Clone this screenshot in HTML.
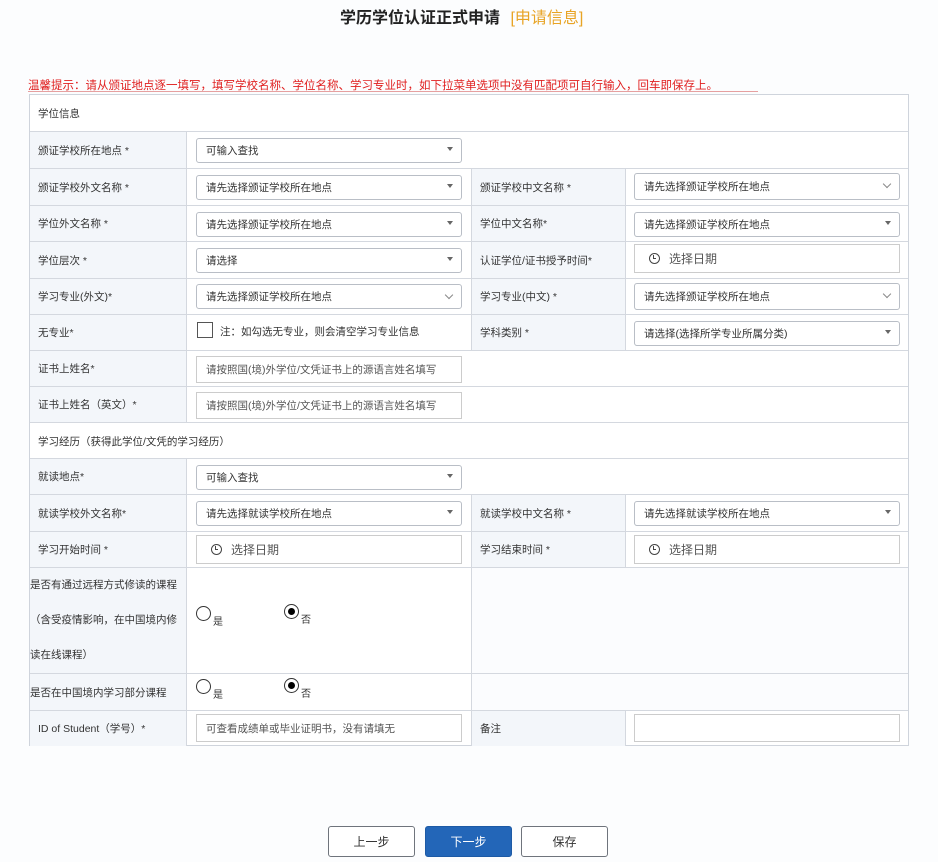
<!DOCTYPE html>
<html><head><meta charset="utf-8"><style>
*{margin:0;padding:0;box-sizing:border-box}
body{width:938px;height:862px;background:#fcfdfe;position:relative;overflow:hidden;font-family:"Liberation Sans","Noto Sans CJK SC",sans-serif;color:#333;font-size:11px}
.a{position:absolute}
.tbl{position:absolute;left:29px;top:94px;width:880px;height:652px;border:1px solid #cfd4dc;background:#fff}
.l{position:absolute;background:#f3f6fa;border-right:1px solid #d4d8df;border-bottom:1px solid #d4d8df;padding-left:8px;display:flex;align-items:center;font-size:10.5px;color:#333}
.hl{position:absolute;left:0;right:0;height:1px;background:#d4d8df}
.v{position:absolute;width:1px;background:#d4d8df}
.in{position:absolute;height:25px;border:1px solid #b9bec6;border-radius:3px;background:#fff;padding-left:9px;display:flex;align-items:center;font-size:10.5px;color:#333}
.in.p{color:#555}
.caret{position:absolute;right:8px;top:8px;width:0;height:0;border-left:3px solid transparent;border-right:3px solid transparent;border-top:4px solid #666}
.chev{position:absolute;right:9px;top:7px;width:6px;height:6px;border-right:1px solid #888;border-bottom:1px solid #888;transform:rotate(45deg)}
.clk{display:inline-block;width:11px;height:11px;border:1.5px solid #444;border-radius:50%;position:relative;margin-right:9px;margin-left:5px}
.clk:after{content:"";position:absolute;left:3px;top:1px;width:2px;height:3px;border-left:1.2px solid #444;border-bottom:1.2px solid #444}
.r{position:absolute;width:15px;height:15px;border:1px solid #333;border-radius:50%;background:#fff}
.r.on:after{content:"";position:absolute;left:3px;top:3px;width:7px;height:7px;border-radius:50%;background:#000}
.btn{position:absolute;top:826px;height:31px;width:87px;border:1px solid #6f747c;border-radius:3px;background:#fff;display:flex;align-items:center;justify-content:center;font-size:12px;color:#333}
</style></head><body>
<div class="a" style="left:340px;top:4px;font-size:16px;font-weight:bold;color:#222">学历学位认证正式申请 <span style="color:#e8a425;font-weight:normal;margin-left:6px">[申请信息]</span></div>
<div class="a" style="left:28px;top:77px;font-size:11.5px;color:#e02020;white-space:nowrap">温馨提示：请从颁证地点逐一填写，填写学校名称、学位名称、学习专业时，如下拉菜单选项中没有匹配项可自行输入，回车即保存上。</div>
<div class="a" style="left:28px;top:91px;width:730px;height:1px;background:#e6a0a0"></div>

<div class="tbl">
<div class="a" style="left:0;top:0;width:878px;height:37px;padding-left:8px;display:flex;align-items:center;font-size:10.5px">学位信息</div>
<div class="hl" style="top:36px"></div>
<div class="a" style="left:0;top:328px;width:878px;height:36px;padding-left:8px;display:flex;align-items:center;font-size:10.5px">学习经历（获得此学位/文凭的学习经历）</div>
<div class="hl" style="top:327px"></div>
<div class="hl" style="top:363px"></div>

<div class="l" style="left:0;top:37px;width:157px;height:37px">颁证学校所在地点 *</div>
<div class="l" style="left:0;top:74px;width:157px;height:37px">颁证学校外文名称 *</div>
<div class="l" style="left:0;top:111px;width:157px;height:36px">学位外文名称 *</div>
<div class="l" style="left:0;top:147px;width:157px;height:37px">学位层次 *</div>
<div class="l" style="left:0;top:184px;width:157px;height:36px">学习专业(外文)*</div>
<div class="l" style="left:0;top:220px;width:157px;height:36px">无专业*</div>
<div class="l" style="left:0;top:256px;width:157px;height:36px">证书上姓名*</div>
<div class="l" style="left:0;top:292px;width:157px;height:36px">证书上姓名（英文）*</div>
<div class="l" style="left:0;top:364px;width:157px;height:36px">就读地点*</div>
<div class="l" style="left:0;top:400px;width:157px;height:37px">就读学校外文名称*</div>
<div class="l" style="left:0;top:437px;width:157px;height:36px">学习开始时间 *</div>
<div class="l" style="left:0;top:473px;width:157px;height:106px;padding-left:0;line-height:35px;display:block;padding-top:0">是否有通过远程方式修读的课程<br>（含受疫情影响，在中国境内修<br>读在线课程）</div>
<div class="l" style="left:0;top:579px;width:157px;height:37px;padding-left:0">是否在中国境内学习部分课程</div>
<div class="l" style="left:0;top:616px;width:157px;height:35px;border-bottom:none">ID of Student（学号）*</div>

<div class="l" style="left:441px;top:74px;width:155px;height:37px;border-left:1px solid #d4d8df">颁证学校中文名称 *</div>
<div class="l" style="left:441px;top:111px;width:155px;height:36px;border-left:1px solid #d4d8df">学位中文名称*</div>
<div class="l" style="left:441px;top:147px;width:155px;height:37px;border-left:1px solid #d4d8df">认证学位/证书授予时间*</div>
<div class="l" style="left:441px;top:184px;width:155px;height:36px;border-left:1px solid #d4d8df">学习专业(中文) *</div>
<div class="l" style="left:441px;top:220px;width:155px;height:36px;border-left:1px solid #d4d8df">学科类别 *</div>
<div class="l" style="left:441px;top:400px;width:155px;height:37px;border-left:1px solid #d4d8df">就读学校中文名称 *</div>
<div class="l" style="left:441px;top:437px;width:155px;height:36px;border-left:1px solid #d4d8df">学习结束时间 *</div>
<div class="a" style="left:442px;top:473px;width:436px;height:142px;background:#fbfcfe"></div>
<div class="l" style="left:441px;top:616px;width:155px;height:35px;border-left:1px solid #d4d8df;border-bottom:none">备注</div>

<div class="hl" style="top:73px"></div><div class="hl" style="top:110px"></div><div class="hl" style="top:146px"></div>
<div class="hl" style="top:183px"></div><div class="hl" style="top:219px"></div><div class="hl" style="top:255px"></div>
<div class="hl" style="top:291px"></div><div class="hl" style="top:399px"></div><div class="hl" style="top:436px"></div>
<div class="hl" style="top:472px"></div><div class="hl" style="top:578px"></div><div class="hl" style="top:615px"></div>
<div class="v" style="left:441px;top:473px;height:143px"></div>

<div class="in" style="left:166px;top:43px;width:266px">可输入查找<i class="caret"></i></div>
<div class="in" style="left:166px;top:80px;width:266px">请先选择颁证学校所在地点<i class="caret"></i></div>
<div class="in" style="left:166px;top:117px;width:266px">请先选择颁证学校所在地点<i class="caret"></i></div>
<div class="in" style="left:166px;top:153px;width:266px">请选择<i class="caret"></i></div>
<div class="in" style="left:166px;top:189px;width:266px">请先选择颁证学校所在地点<i class="chev"></i></div>
<div class="a" style="left:167px;top:227px;width:16px;height:16px;border:1px solid #555;background:#fff"></div>
<div class="a" style="left:190px;top:229px;font-size:10.5px">注：如勾选无专业，则会清空学习专业信息</div>
<div class="in p" style="left:166px;top:261px;width:266px;height:27px;border-radius:0;border-color:#ccc">请按照国(境)外学位/文凭证书上的源语言姓名填写</div>
<div class="in p" style="left:166px;top:297px;width:266px;height:27px;border-radius:0;border-color:#ccc">请按照国(境)外学位/文凭证书上的源语言姓名填写</div>
<div class="in" style="left:166px;top:370px;width:266px">可输入查找<i class="caret"></i></div>
<div class="in" style="left:166px;top:406px;width:266px">请先选择就读学校所在地点<i class="caret"></i></div>
<div class="in p" style="left:166px;top:440px;width:266px;height:29px;border-radius:0;border-color:#ccc;font-size:12px"><span class="clk"></span>选择日期</div>
<div class="r" style="left:166px;top:511px"></div><div class="a" style="left:183px;top:518px;font-size:10px">是</div>
<div class="r on" style="left:254px;top:509px"></div><div class="a" style="left:271px;top:516px;font-size:10px">否</div>
<div class="r" style="left:166px;top:584px"></div><div class="a" style="left:183px;top:591px;font-size:10px">是</div>
<div class="r on" style="left:254px;top:583px"></div><div class="a" style="left:271px;top:590px;font-size:10px">否</div>
<div class="in p" style="left:166px;top:619px;width:266px;height:28px;border-radius:0;border-color:#ccc">可查看成绩单或毕业证明书，没有请填无</div>

<div class="in" style="left:604px;top:78px;width:266px;height:27px">请先选择颁证学校所在地点<i class="chev"></i></div>
<div class="in" style="left:604px;top:117px;width:266px">请先选择颁证学校所在地点<i class="caret"></i></div>
<div class="in p" style="left:604px;top:149px;width:266px;height:29px;border-radius:0;border-color:#ccc;font-size:12px"><span class="clk"></span>选择日期</div>
<div class="in" style="left:604px;top:188px;width:266px;height:27px">请先选择颁证学校所在地点<i class="chev"></i></div>
<div class="in" style="left:604px;top:226px;width:266px">请选择(选择所学专业所属分类)<i class="caret"></i></div>
<div class="in" style="left:604px;top:406px;width:266px">请先选择就读学校所在地点<i class="caret"></i></div>
<div class="in p" style="left:604px;top:440px;width:266px;height:29px;border-radius:0;border-color:#ccc;font-size:12px"><span class="clk"></span>选择日期</div>
<div class="in" style="left:604px;top:619px;width:266px;height:28px;border-radius:0;border-color:#ccc"></div>
</div>

<div class="btn" style="left:328px">上一步</div>
<div class="btn" style="left:425px;background:#2366b8;border-color:#1d5aa5;color:#fff">下一步</div>
<div class="btn" style="left:521px">保存</div>
</body></html>
